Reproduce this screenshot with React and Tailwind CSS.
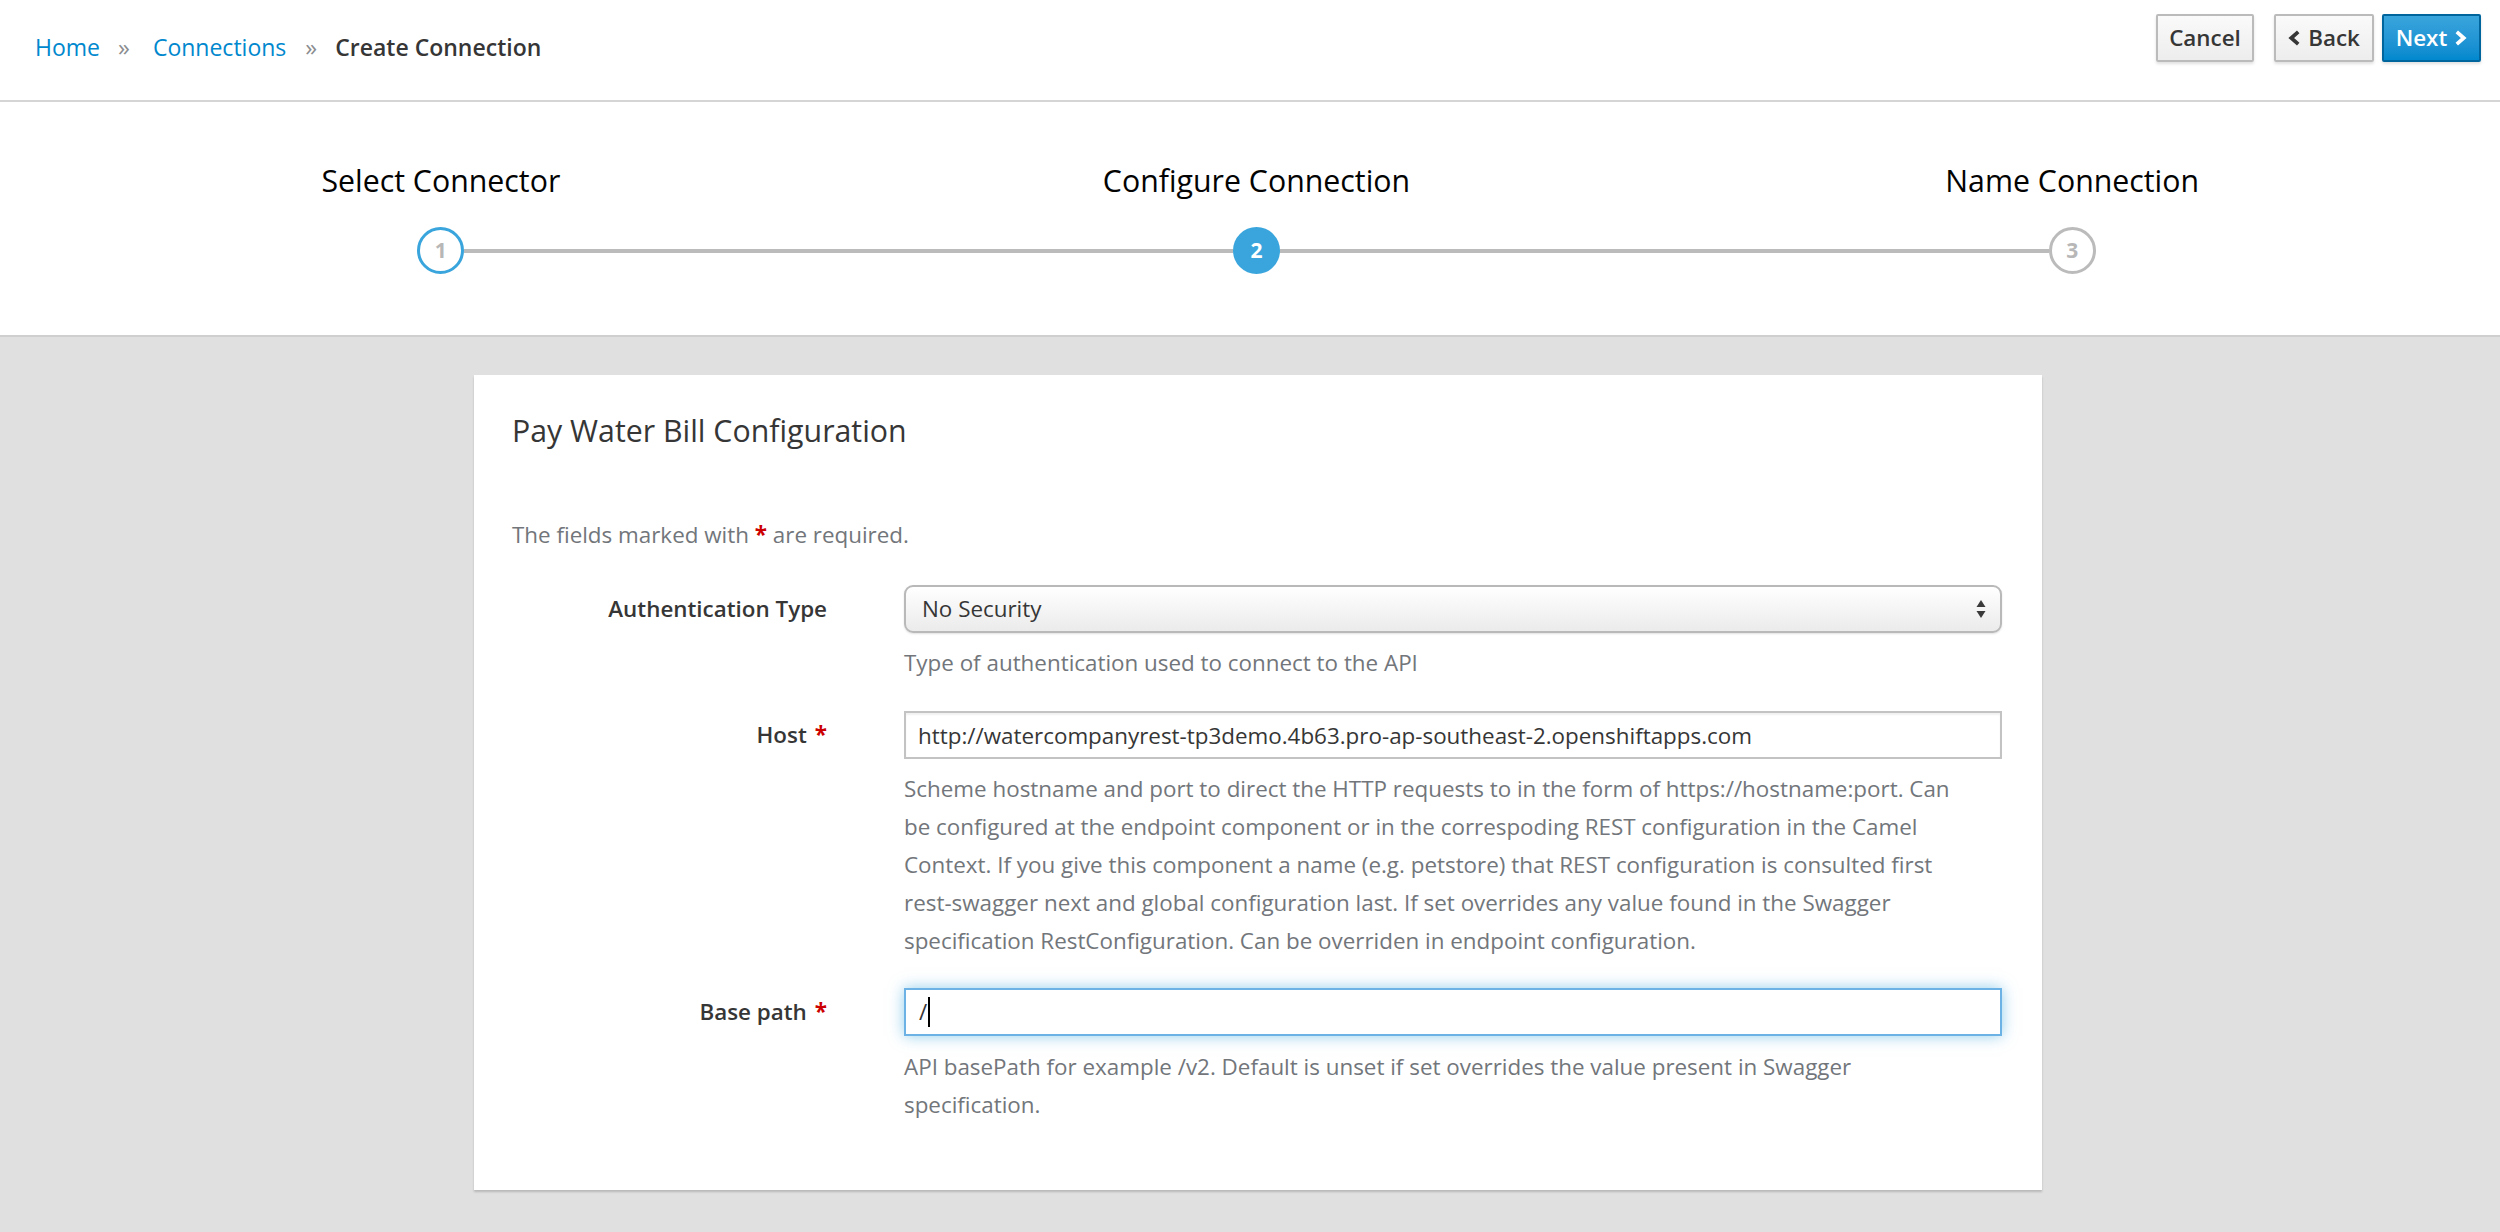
import { useState } from 'react';

const steps = [
  { title: 'Select Connector', num: 1, state: 'done' },
  { title: 'Configure Connection', num: 2, state: 'active' },
  { title: 'Name Connection', num: 3, state: 'todo' },
];

function Chevron({ dir = 'right', className = '' }) {
  const points = dir === 'left' ? '11,1.5 3.5,8 11,14.5' : '3,1.5 10.5,8 3,14.5';
  return (
    <svg viewBox="0 0 14 16" className={className} fill="none">
      <polyline points={points} stroke="currentColor" strokeWidth="4" strokeLinejoin="miter" strokeLinecap="butt" />
    </svg>
  );
}

function StepCircle({ step }) {
  if (step.state === 'active') {
    return (
      <div className="w-[47px] h-[47px] rounded-full bg-[#39a5dc] flex items-center justify-center text-white text-[21px] font-bold shrink-0">
        {step.num}
      </div>
    );
  }
  const ring = step.state === 'done' ? 'border-[#39a5dc]' : 'border-[#bbbbbb]';
  return (
    <div className={`w-[47px] h-[47px] rounded-full bg-white border-[3.5px] ${ring} flex items-center justify-center text-[#b7b7b7] text-[21px] font-bold shrink-0`}>
      {step.num}
    </div>
  );
}

function Required() {
  return <span className="text-[#cc0000] font-bold">*</span>;
}

function FormRow({ label, required, children, help, helpTop = 'mt-[11px]', className = '' }) {
  return (
    <div className={`flex ${className}`}>
      <div className="w-[315px] h-[48px] flex items-center justify-end font-semibold text-[#363636] shrink-0">
        {label}
        {required && <span className="ml-[8px]"><Required /></span>}
      </div>
      <div className="ml-[77px] w-[1098px]">
        {children}
        <div className={`${helpTop} text-[#72767b] leading-[38px]`}>{help}</div>
      </div>
    </div>
  );
}

export default function App() {
  const [host, setHost] = useState('http://watercompanyrest-tp3demo.4b63.pro-ap-southeast-2.openshiftapps.com');

  return (
    <div className="min-h-screen bg-[#e0e0e0] font-['Open_Sans',sans-serif] text-[22.4px] text-[#363636]">
      {/* toolbar */}
      <div className="h-[102px] bg-white border-b-2 border-[#d5d5d5] flex justify-between">
        <div className="flex items-center pl-[35px] pt-[28px] self-start leading-[38px] text-[23px]">
          <a className="text-[#0088ce]">Home</a>
          <span className="ml-[18px] mr-[23px] text-[24px] text-[#8b8d8f]">»</span>
          <a className="text-[#0088ce]">Connections</a>
          <span className="ml-[19px] mr-[18px] text-[24px] text-[#8b8d8f]">»</span>
          <span className="font-semibold text-[#363636]">Create Connection</span>
        </div>
        <div className="flex items-start pt-[14px] pr-[19px]">
          <button className="w-[98px] h-[48px] rounded-[2px] border-2 border-[#bbbbbb] bg-gradient-to-b from-[#fafafa] to-[#ededed] font-semibold text-[#363636] shadow-[0_2px_3px_rgba(3,3,3,0.12)] flex items-center justify-center">
            Cancel
          </button>
          <button className="ml-[20px] w-[100px] h-[48px] rounded-[2px] border-2 border-[#bbbbbb] bg-gradient-to-b from-[#fafafa] to-[#ededed] font-semibold text-[#363636] shadow-[0_2px_3px_rgba(3,3,3,0.12)] flex items-center justify-center gap-[7px]">
            <Chevron dir="left" className="w-[13px] h-[16px]" />
            Back
          </button>
          <button className="ml-[8px] w-[99px] h-[48px] rounded-[2px] border-2 border-[#00659c] bg-gradient-to-b from-[#39a5dc] to-[#0088ce] font-semibold text-white shadow-[0_2px_3px_rgba(3,3,3,0.12)] flex items-center justify-center gap-[7px]">
            Next
            <Chevron dir="right" className="w-[13px] h-[16px]" />
          </button>
        </div>
      </div>

      {/* wizard steps */}
      <div className="h-[235px] bg-white border-b-2 border-[#cfcfcf] grid grid-cols-3 pl-[33px] pr-[20px] pt-[59px]">
        {steps.map((step, i) => (
          <div key={step.num} className="flex flex-col items-center">
            <div className="text-[30.3px] leading-[40px] text-[#030303]">{step.title}</div>
            <div className="mt-[26px] w-full flex items-center">
              <div className={`flex-1 h-[4px] ${i === 0 ? 'bg-transparent' : 'bg-[#bbbbbb]'}`} />
              <StepCircle step={step} />
              <div className={`flex-1 h-[4px] ${i === steps.length - 1 ? 'bg-transparent' : 'bg-[#bbbbbb]'}`} />
            </div>
          </div>
        ))}
      </div>

      {/* content */}
      <div className="pt-[38px] pb-[42px]">
        <div className="ml-[474px] w-[1568px] bg-white shadow-[0_2px_2px_rgba(3,3,3,0.18)] pt-[36px] pl-[38px] pr-[40px] pb-[66px]">
          <h2 className="text-[30.3px] leading-[40px] text-[#363636]">Pay Water Bill Configuration</h2>

          <p className="mt-[65px] leading-[38px] text-[#72767b]">
            The fields marked with <Required /> are required.
          </p>

          <FormRow
            className="mt-[31px]"
            label="Authentication Type"
            help="Type of authentication used to connect to the API"
          >
            <div className="h-[48px] rounded-[9px] border-2 border-[#b9b9b9] bg-gradient-to-b from-white to-[#ebebeb] shadow-[0_1px_2px_rgba(0,0,0,0.12)] flex items-center justify-between pl-[16px] pr-[14px] text-[#363636]">
              <span>No Security</span>
              <svg viewBox="0 0 10 20" className="w-[10px] h-[20px]">
                <polygon points="5,1 9.5,8 0.5,8" fill="#3a3a3a" />
                <polygon points="0.5,12 9.5,12 5,19" fill="#3a3a3a" />
              </svg>
            </div>
          </FormRow>

          <FormRow
            className="mt-[29px]"
            label="Host"
            required
            help={
              <>
                Scheme hostname and port to direct the HTTP requests to in the form of https://hostname:port. Can
                <br />
                be configured at the endpoint component or in the correspoding REST configuration in the Camel
                <br />
                Context. If you give this component a name (e.g. petstore) that REST configuration is consulted first
                <br />
                rest-swagger next and global configuration last. If set overrides any value found in the Swagger
                <br />
                specification RestConfiguration. Can be overriden in endpoint configuration.
              </>
            }
          >
            <input
              value={host}
              onChange={(e) => setHost(e.target.value)}
              className="w-full h-[48px] border-2 border-[#c3c3c3] shadow-[inset_0_2px_2px_rgba(3,3,3,0.06)] pl-[12px] text-[#363636] outline-none bg-white"
            />
          </FormRow>

          <FormRow
            className="mt-[28px]"
            label="Base path"
            required
            helpTop="mt-[12px]"
            help={
              <>
                API basePath for example /v2. Default is unset if set overrides the value present in Swagger
                <br />
                specification.
              </>
            }
          >
            <div className="h-[48px] border-2 border-[#6cb2e4] bg-white shadow-[0_0_14px_rgba(57,165,220,0.55)] pl-[13px] flex items-center text-[#363636]">
              <span>/</span>
              <span className="ml-[1px] w-[2px] h-[30px] bg-black" />
            </div>
          </FormRow>
        </div>
      </div>
    </div>
  );
}
